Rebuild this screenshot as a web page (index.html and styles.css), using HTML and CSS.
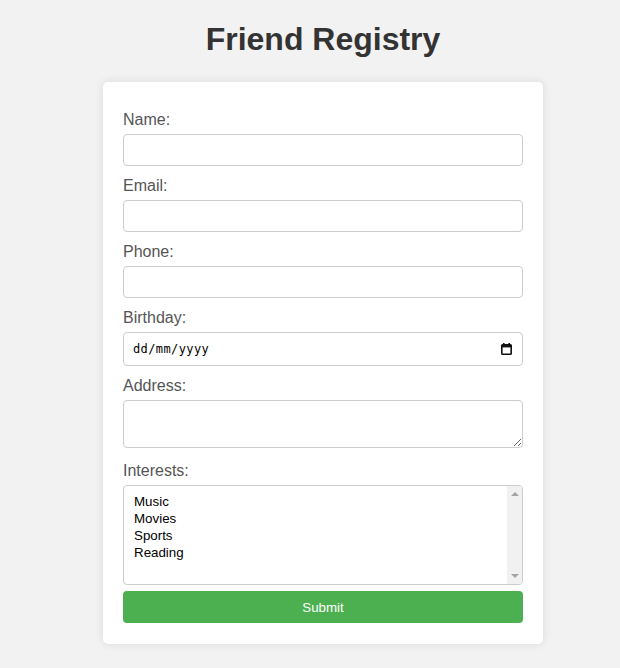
FILE: index.html
```html
<!DOCTYPE html>
<html lang="en-GB">
<head>
<meta charset="utf-8">
<title>Friend Registry</title>
<link rel="stylesheet" href="styles.css">
</head>
<body>
<div class="page">
  <h1 class="title">Friend Registry</h1>
  <form class="card">
    <label class="field-label" for="name">Name:</label>
    <input class="field" type="text" id="name">
    <label class="field-label" for="email">Email:</label>
    <input class="field" type="email" id="email">
    <label class="field-label" for="phone">Phone:</label>
    <input class="field" type="tel" id="phone">
    <label class="field-label" for="bday">Birthday:</label>
    <div class="date-wrap">
      <input class="field field-date" type="text" id="bday" placeholder="dd/mm/yyyy">
      <svg class="cal-icon" width="11" height="12" viewBox="0 0 11 12" aria-hidden="true">
        <rect x="2" y="0" width="1.6" height="2.5" fill="#111"/>
        <rect x="7.4" y="0" width="1.6" height="2.5" fill="#111"/>
        <rect x="0.8" y="1.8" width="9.4" height="9.4" rx="0.8" fill="none" stroke="#111" stroke-width="1.6"/>
        <rect x="0.8" y="1.8" width="9.4" height="2.6" fill="#111"/>
      </svg>
    </div>
    <label class="field-label" for="addr">Address:</label>
    <textarea class="field field-area" id="addr"></textarea>
    <label class="field-label" for="int">Interests:</label>
    <div class="select-wrap">
      <select class="field field-select" id="int" multiple>
        <option>Music</option>
        <option>Movies</option>
        <option>Sports</option>
        <option>Reading</option>
      </select>
      <div class="fake-scroll" aria-hidden="true">
        <span class="arrow arrow-up"></span>
        <span class="arrow arrow-down"></span>
      </div>
    </div>
    <button class="submit" type="button">Submit</button>
  </form>
</div>
</body>
</html>
```
FILE: styles.css
```css
html, body {
  margin: 0;
  padding: 0;
}
body {
  background: #f2f2f2;
  font-family: Arial, "Liberation Sans", sans-serif;
  color: #333;
}
.page {
  padding: 21px 0 20px 26px;
}
.title {
  margin: 0 0 24px;
  text-align: center;
  font-size: 32px;
  font-weight: bold;
  color: #333;
  line-height: 37px;
}
.card {
  width: 400px;
  margin: 0 auto;
  padding: 28px 20px 21px;
  background: #fff;
  border-radius: 5px;
  box-shadow: 0 0 10px rgba(0, 0, 0, 0.1);
  display: flex;
  flex-direction: column;
}
.field-label {
  display: block;
  font-size: 16px;
  line-height: 18px;
  color: #555;
  padding-top: 1px;
  margin-bottom: 5px;
}
.field {
  box-sizing: border-box;
  width: 400px;
  height: 32px;
  margin: 0 0 10px;
  padding: 8px;
  border: 1px solid #ccc;
  border-radius: 4px;
  background: #fff;
  font-family: Arial, "Liberation Sans", sans-serif;
  font-size: 13.33px;
  color: #000;
}
.date-wrap {
  position: relative;
  width: 400px;
}
.field-date {
  display: block;
  height: 34px;
  padding-left: 9px;
  font-family: "DejaVu Sans Mono", "Liberation Mono", monospace;
  font-size: 12px;
  letter-spacing: 0.4px;
}
.field-date::placeholder {
  color: #000;
  opacity: 1;
}
.cal-icon {
  position: absolute;
  right: 11px;
  top: 11px;
}
.field-area {
  height: 48px;
  margin-bottom: 13px;
  resize: vertical;
}
.select-wrap {
  position: relative;
  width: 400px;
  margin-bottom: 6px;
}
.field-select {
  display: block;
  height: 100px;
  margin: 0;
  padding: 8px 0 8px 8px;
}
.field-select option {
  padding: 0 2px 1px;
  line-height: 16px;
}
.fake-scroll {
  position: absolute;
  top: 1px;
  right: 1px;
  bottom: 1px;
  width: 15px;
  background: #f1f1f1;
  border-radius: 0 3px 3px 0;
}
.arrow {
  position: absolute;
  left: 4px;
  width: 0;
  height: 0;
  border-left: 4px solid transparent;
  border-right: 4px solid transparent;
}
.arrow-up {
  top: 6px;
  border-bottom: 4px solid #a3a3a3;
}
.arrow-down {
  bottom: 6px;
  border-top: 4px solid #a3a3a3;
}
.submit {
  box-sizing: border-box;
  width: 400px;
  height: 32px;
  border: 0;
  border-radius: 4px;
  background: #4caf50;
  color: #fff;
  font-family: Arial, "Liberation Sans", sans-serif;
  font-size: 13.33px;
}
```
